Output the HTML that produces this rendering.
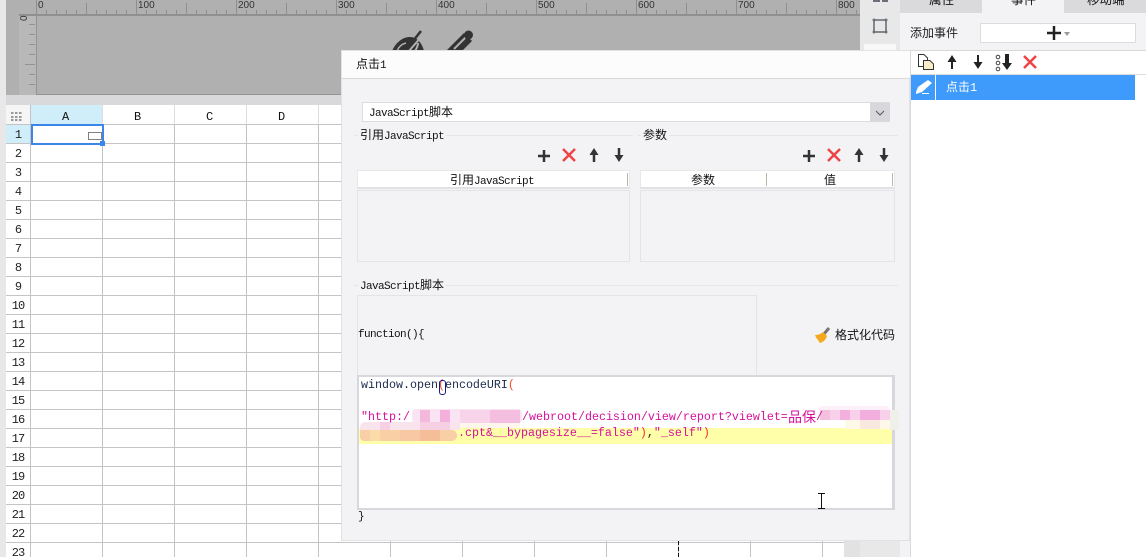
<!DOCTYPE html>
<html><head><meta charset="utf-8">
<style>
html,body{margin:0;padding:0;width:1146px;height:557px;overflow:hidden;background:#fff}
body{position:relative;font-family:"Liberation Mono","Noto Sans CJK SC",monospace;font-size:12px;color:#111}
.a{position:absolute;box-sizing:border-box}
.t{position:absolute;white-space:pre;line-height:16px;height:16px}
.c{font-size:12px}
.r{position:absolute;left:6px;width:24px;text-align:center;font-size:12px;letter-spacing:-1px;line-height:18px;color:#222}
.m{position:absolute;white-space:pre;font-size:11.67px;line-height:16px;height:16px}
.b{position:absolute}
.l{font-size:11px;letter-spacing:-.6px}
</style></head><body>
<!-- left strip -->
<div class="a" style="left:0;top:0;width:6px;height:557px;background:#e8e8e8"></div>
<!-- top design area -->
<div class="a" style="left:6px;top:0;width:854px;height:95px;background:#b0b0b0"></div>
<div class="a" style="left:6px;top:95px;width:854px;height:10px;background:#d9d9db"></div>
<div class="a" style="left:19px;top:15px;width:17px;height:80px;background:#b8b8b8"></div>
<svg class="a" style="left:0;top:0" width="860" height="105">
<defs>
<pattern id="px" x="36" y="0" width="100" height="15" patternUnits="userSpaceOnUse">
<path d="M0.5 0V14M50.5 3V14M10.5 10V14M20.5 10V14M30.5 10V14M40.5 10V14M60.5 10V14M70.5 10V14M80.5 10V14M90.5 10V14" stroke="#8f8f8f" fill="none"/>
</pattern>
</defs>
<rect x="36" y="0" width="824" height="15" fill="url(#px)"/>
<rect x="19" y="14" width="841" height="2" fill="#909090"/>
<rect x="36" y="14" width="1" height="81" fill="#929292"/>
<rect x="36" y="94" width="824" height="1" fill="#939393"/>
<path d="M29 24.5H35M29 34.5H35M29 44.5H35M29 54.5H35M25 64.5H35M29 74.5H35M29 84.5H35" stroke="#929292" fill="none"/>
<g font-family="Liberation Sans" font-size="10" fill="#333">
<text x="38" y="8">0</text><text x="138" y="8">100</text><text x="238" y="8">200</text><text x="338" y="8">300</text><text x="438" y="8">400</text><text x="538" y="8">500</text><text x="638" y="8">600</text><text x="738" y="8">700</text><text x="838" y="8">800</text>
<text x="0" y="0" transform="translate(27,21) rotate(-90)">0</text>
</g>
<!-- eye slash -->
<path d="M392 51C396 42 403 37 410 37C417 37 422 43 424 51Z" fill="#333"/>
<path d="M397 51C399 46 402 44 406 43" stroke="#b0b0b0" stroke-width="1.500" fill="none"/>
<path d="M409 51L422 36M415 51C417 48 418 46 418 43" stroke="#b0b0b0" stroke-width="2" fill="none"/>
<path d="M405 51L421 31" stroke="#333" stroke-width="2.500"/>
<!-- pencil -->
<path d="M446 51L464 33L472 41L462 51Z" fill="#333"/>
<path d="M454 49L466 37" stroke="#b0b0b0" stroke-width="2"/>
<circle cx="468.500" cy="35" r="4.500" fill="#333"/>
</svg>

<!-- grid -->
<svg class="a" style="left:0;top:105px" width="844" height="452">
<rect x="6" y="0" width="24" height="19" fill="#f5f5f6"/>
<rect x="31" y="0" width="71" height="19" fill="#cfeefa"/>
<rect x="6" y="20" width="24" height="18" fill="#cfeefa"/>
<g fill="#999"><rect x="11" y="7" width="2.5" height="2"/><rect x="15" y="7" width="2.5" height="2"/><rect x="19" y="7" width="2.5" height="2"/><rect x="11" y="11" width="2.5" height="2"/><rect x="15" y="11" width="2.5" height="2"/><rect x="19" y="11" width="2.5" height="2"/><rect x="11" y="14" width="2.5" height="2"/><rect x="15" y="14" width="2.5" height="2"/><rect x="19" y="14" width="2.5" height="2"/></g>
<path d="M6 19.5H844M6 38.5H844M6 57.5H844M6 76.5H844M6 95.5H844M6 114.5H844M6 133.5H844M6 152.5H844M6 171.5H844M6 190.5H844M6 209.5H844M6 228.5H844M6 247.5H844M6 266.5H844M6 285.5H844M6 304.5H844M6 323.5H844M6 342.5H844M6 361.5H844M6 380.5H844M6 399.5H844M6 418.5H844M6 437.5H844" stroke="#c4c4c4" fill="none"/>
<path d="M30.5 0V452M102.5 19V452M174.5 19V452M246.5 19V452M318.5 19V452M390.5 19V452M462.5 19V452M534.5 19V452M606.5 19V452M750.5 19V452M822.5 19V452M678.5 19V452" stroke="#c4c4c4" fill="none"/>
<path d="M102.5 0V19M174.5 0V19M246.5 0V19M318.5 0V19" stroke="#dedede" fill="none"/>
</svg>
<div class="a" style="left:31px;top:124px;width:73px;height:21px;border:2px solid #3b86e8"></div>
<div class="a" style="left:100px;top:141px;width:5px;height:5px;background:#3b86e8"></div>
<div class="a" style="left:88px;top:132px;width:14px;height:8px;border:1px solid #808080;background:#fff"></div>
<div class="c t" style="left:62px;top:109px">A</div>
<div class="c t" style="left:134px;top:109px">B</div>
<div class="c t" style="left:206px;top:109px">C</div>
<div class="c t" style="left:278px;top:109px">D</div>
<div class="r" style="top:126px">1</div><div class="r" style="top:145px">2</div><div class="r" style="top:164px">3</div><div class="r" style="top:183px">4</div><div class="r" style="top:202px">5</div><div class="r" style="top:221px">6</div><div class="r" style="top:240px">7</div><div class="r" style="top:259px">8</div><div class="r" style="top:278px">9</div><div class="r" style="top:297px">10</div><div class="r" style="top:316px">11</div><div class="r" style="top:335px">12</div><div class="r" style="top:354px">13</div><div class="r" style="top:373px">14</div><div class="r" style="top:392px">15</div><div class="r" style="top:411px">16</div><div class="r" style="top:430px">17</div><div class="r" style="top:449px">18</div><div class="r" style="top:468px">19</div><div class="r" style="top:487px">20</div><div class="r" style="top:506px">21</div><div class="r" style="top:525px">22</div><div class="r" style="top:544px">23</div>

<!-- right gray columns -->
<div class="a" style="left:844px;top:105px;width:16px;height:452px;background:#e2e2e2"></div>
<div class="a" style="left:860px;top:0;width:40px;height:557px;background:#e8e8e8"></div>
<div class="a" style="left:864px;top:44px;width:32px;height:10px;background:#f8f8f8"></div>
<div class="a" style="left:900px;top:0;width:246px;height:557px;background:#f3f3f6"></div>
<svg class="a" style="left:860px;top:0" width="40" height="44">
<rect x="14" y="20" width="12" height="12" fill="none" stroke="#6a6f78" stroke-width="1.6"/>
<path d="M12.500 20h3M24.500 20h3M12.500 32h3M24.500 32h3M14 18.500v3M26 18.500v3M14 30.500v3M26 30.500v3" stroke="#6a6f78" stroke-width="1.6"/>
<path d="M13 0h7M22 0h6" stroke="#6a6f78" stroke-width="4"/>
</svg>

<!-- tabs -->
<div class="a" style="left:900px;top:0;width:82px;height:13px;background:#dadadd;overflow:hidden"><div class="t" style="left:29px;top:-7px;font-size:12.5px;line-height:16px">属性</div></div>
<div class="a" style="left:982px;top:0;width:82px;height:13px;background:#f3f3f6;overflow:hidden"><div class="t" style="left:29px;top:-7px;font-size:12.5px">事件</div></div>
<div class="a" style="left:1064px;top:0;width:82px;height:13px;background:#dadadd;overflow:hidden"><div class="t" style="left:23px;top:-7px;font-size:12.5px">移动端</div></div>
<div class="t" style="left:910px;top:26px;font-size:12px;color:#222">添加事件</div>
<div class="a" style="left:980px;top:23px;width:156px;height:20px;background:#fff;border:1px solid #dcdcdc"></div>
<svg class="a" style="left:1040px;top:24px" width="36" height="18">
<path d="M14 2V16M7 9H21" stroke="#222" stroke-width="2.500"/><path d="M24 8h6l-3 4z" fill="#999"/>
</svg>

<!-- events panel -->
<div class="a" style="left:910px;top:50px;width:236px;height:507px;background:#fff;border-left:1px solid #d9d9dc;border-top:1px solid #d9d9dc"></div>
<div class="a" style="left:911px;top:74px;width:235px;height:1px;background:#dcdcdc"></div>
<div class="a" style="left:911px;top:75px;width:224px;height:25px;background:#3f9bfb"></div>
<div class="a" style="left:935px;top:75px;width:1px;height:25px;background:#fff"></div>
<div class="t" style="left:946px;top:80px;font-size:12px;color:#fff">点击1</div>
<svg class="a" style="left:911px;top:51px" width="140" height="50">
<path d="M7.500 3.500H13L16.500 7V9.500H12.500V15.500H7.500Z" fill="#fff" stroke="#333"/>
<path d="M12.500 9.500H19L22.500 13V18.500H12.500Z" fill="#f7edc8" stroke="#333"/>
<path d="M41 18V10" stroke="#222" stroke-width="2"/><path d="M36.500 11L41 4L45.500 11Z" fill="#222"/>
<path d="M67 4V12" stroke="#222" stroke-width="2"/><path d="M62.500 11L67 18L71.500 11Z" fill="#222"/>
<circle cx="87" cy="6" r="1.800" fill="none" stroke="#444"/><circle cx="87" cy="12" r="1.800" fill="none" stroke="#444"/><circle cx="87" cy="18" r="1.800" fill="none" stroke="#444"/>
<path d="M96 3V13" stroke="#222" stroke-width="4"/><path d="M91 12H101L96 19Z" fill="#222"/>
<path d="M113 5L125 17M125 5L113 17" stroke="#ee4444" stroke-width="2.500"/>
<path d="M5 41L7 36L17 29L21 32L11 41L5 43Z" fill="#fff"/><path d="M11 42.500H18" stroke="#fff"/>
</svg>

<!-- dialog -->
<div class="a" style="left:341px;top:50px;width:569px;height:491px;background:#f3f3f6;border:1px solid #e2e2e4"></div>
<div class="a" style="left:342px;top:51px;width:568px;height:28px;background:#fcfcfc;border-bottom:1px solid #d8d8dc"></div>
<div class="t" style="left:356px;top:57px;font-size:12px">点击<span class="l">1</span></div>

<div class="a" style="left:362px;top:102px;width:528px;height:20px;background:#fff;border:1px solid #dcdcde"></div>
<div class="a" style="left:870px;top:103px;width:20px;height:19px;background:#d8d8dc"></div>
<svg class="a" style="left:870px;top:103px" width="20" height="19"><path d="M6 8L10 12L14 8" stroke="#555" fill="none"/></svg>
<div class="t" style="left:369px;top:105px"><span class="l">JavaScript</span>脚本</div>

<!-- section lines -->
<div class="a" style="left:354px;top:135px;width:279px;height:1px;background:#e6e6e8"></div>
<div class="a" style="left:637px;top:135px;width:261px;height:1px;background:#e6e6e8"></div>
<div class="a" style="left:354px;top:285px;width:544px;height:1px;background:#e6e6e8"></div>
<div class="t" style="left:358px;top:128px;background:#f3f3f6;padding:0 2px">引用<span class="l">JavaScript</span></div>
<div class="t" style="left:641px;top:128px;background:#f3f3f6;padding:0 2px;font-size:12px">参数</div>
<div class="t" style="left:358px;top:278px;background:#f3f3f6;padding:0 2px"><span class="l">JavaScript</span>脚本</div>

<svg class="a" style="left:530px;top:145px" width="370" height="22">
<g>
<path d="M14 5V17M8 11H20" stroke="#333" stroke-width="2.500"/>
<path d="M33 4L45 16M45 4L33 16" stroke="#ee4444" stroke-width="2.500"/>
<path d="M64 17V9" stroke="#333" stroke-width="2.500"/><path d="M59.500 10L64 3L68.500 10Z" fill="#333"/>
<path d="M89 3V11" stroke="#333" stroke-width="2.500"/><path d="M84.500 10L89 17L93.500 10Z" fill="#333"/>
</g>
<g transform="translate(265,0)">
<path d="M14 5V17M8 11H20" stroke="#333" stroke-width="2.500"/>
<path d="M33 4L45 16M45 4L33 16" stroke="#ee4444" stroke-width="2.500"/>
<path d="M64 17V9" stroke="#333" stroke-width="2.500"/><path d="M59.500 10L64 3L68.500 10Z" fill="#333"/>
<path d="M89 3V11" stroke="#333" stroke-width="2.500"/><path d="M84.500 10L89 17L93.500 10Z" fill="#333"/>
</g>
</svg>

<!-- tables -->
<div class="a" style="left:357px;top:170px;width:273px;height:19px;background:#fff;border:1px solid #e8e8ea;border-bottom:2px solid #e2e2e4"></div>
<div class="a" style="left:357px;top:190px;width:273px;height:72px;border:1px solid #e4e4e6"></div>
<div class="a" style="left:627px;top:173px;width:1px;height:13px;background:#b8b8a8"></div>
<div class="t" style="left:450px;top:173px">引用<span class="l">JavaScript</span></div>
<div class="a" style="left:640px;top:170px;width:255px;height:19px;background:#fff;border:1px solid #e8e8ea;border-bottom:2px solid #e2e2e4"></div>
<div class="a" style="left:640px;top:190px;width:255px;height:72px;border:1px solid #e4e4e6"></div>
<div class="a" style="left:766px;top:173px;width:1px;height:13px;background:#b8b8a8"></div>
<div class="a" style="left:892px;top:173px;width:1px;height:13px;background:#b8b8a8"></div>
<div class="t" style="left:691px;top:173px;font-size:12px">参数</div>
<div class="t" style="left:824px;top:173px;font-size:12px">值</div>

<!-- function box -->
<div class="a" style="left:357px;top:295px;width:400px;height:81px;border:1px solid #e4e4e6;border-bottom:0"></div>
<div class="t l" style="left:358px;top:327px;color:#111">function(){</div>
<svg class="a" style="left:813px;top:326px" width="20" height="20">
<path d="M16 2L11 8" stroke="#777" stroke-width="3"/>
<path d="M2 9C5 9 8 8 10 6L14 10C13 13 11 16 7 17C5 14 3 12 2 9Z" fill="#f5a81c"/>
</svg>
<div class="t" style="left:835px;top:328px;font-size:12px">格式化代码</div>

<!-- editor -->
<div class="a" style="left:357px;top:375px;width:538px;height:135px;background:#fff;border:2px solid #d8d8dc;border-right-width:3px"></div>
<div class="a" style="left:359px;top:428px;width:533px;height:16px;background:#ffffaa"></div>
<!-- mosaic line 2 -->
<div class="b" style="left:412px;top:409px;width:110px;height:14px;background:#fae3f2;border-radius:4px"></div>
<div class="b" style="left:420px;top:410px;width:10px;height:13px;background:#f4b8dc"></div>
<div class="b" style="left:440px;top:410px;width:10px;height:13px;background:#f3b0dc"></div>
<div class="b" style="left:460px;top:410px;width:30px;height:13px;background:#f8d4ea"></div>
<div class="b" style="left:490px;top:410px;width:30px;height:13px;background:#f3bee0"></div>
<!-- mosaic line 3 -->
<div class="b" style="left:360px;top:422px;width:100px;height:8px;background:#f9e4ee;border-radius:5px 0 0 0"></div>
<div class="b" style="left:380px;top:422px;width:10px;height:8px;background:#f7d0e4"></div>
<div class="b" style="left:420px;top:422px;width:30px;height:8px;background:#f7cfe3"></div>
<div class="b" style="left:460px;top:423px;width:60px;height:5px;background:#fdf6ec"></div>
<div class="b" style="left:360px;top:430px;width:97px;height:11px;background:#f9d0a6;border-radius:0 5px 5px 4px"></div>
<div class="b" style="left:370px;top:430px;width:10px;height:11px;background:#fbdca8"></div>
<div class="b" style="left:400px;top:430px;width:20px;height:11px;background:#f8c8a4"></div>
<div class="b" style="left:420px;top:430px;width:20px;height:11px;background:#f5bd98"></div>
<!-- mosaic right -->
<div class="b" style="left:818px;top:406px;width:72px;height:4px;background:#fdf0f8;border-radius:4px 4px 0 0"></div>
<div class="b" style="left:820px;top:410px;width:70px;height:10px;background:#f8d0ea"></div>
<div class="b" style="left:820px;top:410px;width:10px;height:10px;background:#f4c0e0"></div>
<div class="b" style="left:840px;top:410px;width:10px;height:10px;background:#f3b0dc"></div>
<div class="b" style="left:860px;top:410px;width:20px;height:10px;background:#f2aedc"></div>
<div class="b" style="left:845px;top:420px;width:47px;height:9px;background:#fdf8e8"></div>
<div class="b" style="left:860px;top:420px;width:20px;height:9px;background:#f9e8e0"></div>
<div class="b" style="left:890px;top:410px;width:9px;height:20px;background:#f0f0ea"></div>

<div class="m" style="left:361px;top:377px;color:#1a2a4a">window.open<span style="color:#f2502a">(</span>encodeURI<span style="color:#f2502a">(</span></div>
<div class="a" style="left:439px;top:380px;width:7px;height:15px;border:1px solid #1a1a8a;border-radius:3px"></div>
<div class="m" style="left:361px;top:409px;color:#d6109c">"http:/</div>
<div class="m" style="left:522px;top:409px;color:#d6109c">/webroot/decision/view/report?viewlet=</div>
<div class="t" style="left:788px;top:411px;color:#d6109c;font-size:14px">品保</div>
<div class="m" style="left:816px;top:409px;color:#d6109c">/</div>
<div class="m" style="left:458px;top:425px;color:#d6109c">.cpt&amp;__bypagesize__=false"<span style="color:#f2302a">)</span><span style="color:#222">,</span>"_self"<span style="color:#f2302a">)</span></div>
<div class="t l" style="left:358px;top:509px;color:#111">}</div>

<svg class="a" style="left:815px;top:492px" width="14" height="18"><path d="M3 1.500H10M3 16.500H10M6.500 2V16" stroke="#111" fill="none"/></svg>
<div class="a" style="left:678px;top:541px;width:1px;height:16px;background:repeating-linear-gradient(#111 0 4px,transparent 4px 6px)"></div>
</body></html>
